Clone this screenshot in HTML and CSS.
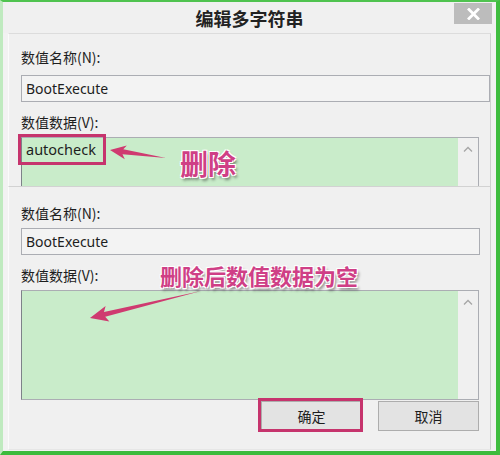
FILE: index.html
```html
<!DOCTYPE html>
<html lang="zh-CN">
<head>
<meta charset="utf-8">
<title>编辑多字符串</title>
<link rel="stylesheet" href="styles.css">
</head>
<body>
<div class="page">
  <div class="frame">
    <div class="titlebar">
      <span class="spacer"></span>
      <h1 class="title">编辑多字符串</h1>
      <button class="close" aria-label="关闭">
        <svg width="13" height="12" viewBox="0 0 13 12"><path d="M2 1.5 L11 10.5 M11 1.5 L2 10.5" stroke="#fff" stroke-width="2.8" stroke-linecap="square"/></svg>
      </button>
    </div>

    <section class="dialog dialog-top">
      <div class="label">数值名称(N):</div>
      <div class="field field-top">BootExecute</div>
      <div class="label label-data">数值数据(V):</div>
      <div class="area area-top">
        <div class="area-text">autocheck</div>
        <div class="scroll">
          <svg width="10" height="6" viewBox="0 0 10 6"><polyline points="1,5.5 5,1.5 9,5.5" fill="none" stroke="#a6a6a6" stroke-width="1.3"/></svg>
        </div>
      </div>
    </section>

    <section class="dialog dialog-bottom">
      <div class="label">数值名称(N):</div>
      <div class="field field-bottom">BootExecute</div>
      <div class="label label-data">数值数据(V):</div>
      <div class="area area-bottom">
        <div class="area-text"></div>
        <div class="scroll">
          <svg width="10" height="6" viewBox="0 0 10 6"><polyline points="1,5.5 5,1.5 9,5.5" fill="none" stroke="#a6a6a6" stroke-width="1.3"/></svg>
        </div>
      </div>
      <div class="buttons">
        <button class="btn">确定</button>
        <button class="btn">取消</button>
      </div>
    </section>
  </div>

  <svg class="marks" width="500" height="455" viewBox="0 0 500 455">
    <rect x="19.5" y="135.5" width="85" height="28" fill="none" stroke="#c6346d" stroke-width="3"/>
    <rect x="259.5" y="399.5" width="102" height="31" fill="none" stroke="#c6346d" stroke-width="3"/>
    <polygon points="110,150 124.8,159.2 122.5,154.3 166,158 123.3,149.3 126.8,145.4" fill="#cf3a70"/>
    <polygon points="90,318 109.4,321.5 105.2,316.8 201,291 104,312 105.6,305.9" fill="#cf3a70"/>
  </svg>
  <div class="note note-del">删除</div>
  <div class="note note-empty">删除后数值数据为空</div>
</div>
</body>
</html>
```

FILE: styles.css
```css
html, body {
  margin: 0;
  padding: 0;
  background: #f0f0f0;
}

.page {
  position: relative;
  width: 500px;
  height: 455px;
  overflow: hidden;
  font-family: "Noto Sans CJK SC", "Noto Sans", sans-serif;
  color: #1e1e1e;
}

.frame {
  box-sizing: border-box;
  width: 500px;
  height: 455px;
  display: flex;
  flex-direction: column;
  background: #f2f2f2;
  border-top: 2px solid #4fc34f;
  border-right: 4px solid #3fbd3f;
  border-bottom: 4px solid #3cbb3c;
  border-left: 3px solid #bfeabf;
}

.titlebar {
  height: 31px;
  flex: none;
  display: grid;
  grid-template-columns: 1fr auto 1fr;
  align-items: center;
  background: #f0f0f0;
}

.title {
  margin: 0;
  font-size: 18px;
  line-height: 22px;
  font-weight: 700;
  color: #222;
  letter-spacing: 0;
}

.close {
  justify-self: end;
  align-self: start;
  margin: 1px 4px 0 0;
  width: 38px;
  height: 21px;
  padding: 0;
  border: none;
  background: #bcbcbc;
  display: flex;
  align-items: center;
  justify-content: center;
}

.dialog {
  box-sizing: border-box;
  margin: 0 5px;
  display: flex;
  flex-direction: column;
  overflow: hidden;
  background: #f0f0f0;
  border-left: 1px solid #fbfbfb;
  border-right: 1px solid #cfcfcf;
  padding-left: 12px;
}

.dialog-top {
  height: 153px;
  flex: none;
  border-top: 1px solid #dcdcdc;
  padding-top: 15px;
}

.dialog-bottom {
  flex: 1;
  border-top: 1px solid #d2d2d2;
  padding-top: 18px;
  margin-bottom: 1px;
  border-bottom: 1px solid #e6e6e6;
}

.label {
  font-size: 14px;
  line-height: 16px;
  height: 16px;
  white-space: nowrap;
}

.label-data {
  margin-top: 12px;
}

.field {
  box-sizing: border-box;
  height: 27px;
  border: 1px solid #abadb3;
  background: #f3f3f3;
  padding: 0 4px;
  font-family: "Noto Sans", "Noto Sans CJK SC", sans-serif;
  font-size: 14px;
  line-height: 25px;
}

.field-top {
  margin-top: 10px;
  margin-right: 0;
}

.field-bottom {
  margin-top: 7px;
  margin-right: 10px;
}

.area {
  box-sizing: border-box;
  margin-top: 7px;
  margin-right: 11px;
  display: flex;
  flex: none;
  border: 1px solid #abadb3;
  border-left-color: #7d8289;
}

.area-top {
  height: 70px;
}

.area-bottom {
  height: 110px;
}

.area-text {
  flex: 1;
  background: #c9ecca;
  padding: 2px 4px;
  font-family: "Noto Sans", "Noto Sans CJK SC", sans-serif;
  font-size: 14.5px;
  line-height: 18px;
}

.scroll {
  width: 20px;
  flex: none;
  background: #f0f0f0;
  display: flex;
  justify-content: center;
  padding-top: 8px;
  box-sizing: border-box;
}

.buttons {
  display: flex;
  justify-content: flex-end;
  gap: 16px;
  margin-top: 1px;
  margin-right: 11px;
}

.btn {
  width: 101px;
  height: 30px;
  padding: 0;
  border: 1px solid #adadad;
  background: #e3e3e3;
  font-family: "Noto Sans CJK SC", sans-serif;
  font-size: 14px;
  color: #1e1e1e;
}

.marks {
  position: absolute;
  left: 0;
  top: 0;
  pointer-events: none;
}

.note {
  position: absolute;
  font-family: "Noto Sans CJK SC", sans-serif;
  font-weight: 700;
  color: #cf3f86;
  white-space: nowrap;
  text-shadow:
    -1px -1px 0 #fff, 1px -1px 0 #fff, -1px 1px 0 #fff, 1px 1px 0 #fff,
    2px 3px 3px rgba(0, 0, 0, 0.45);
}

.note-del {
  left: 180px;
  top: 149px;
  font-size: 28px;
  line-height: 28px;
}

.note-empty {
  left: 160px;
  top: 264px;
  font-size: 22px;
  line-height: 22px;
}
```
